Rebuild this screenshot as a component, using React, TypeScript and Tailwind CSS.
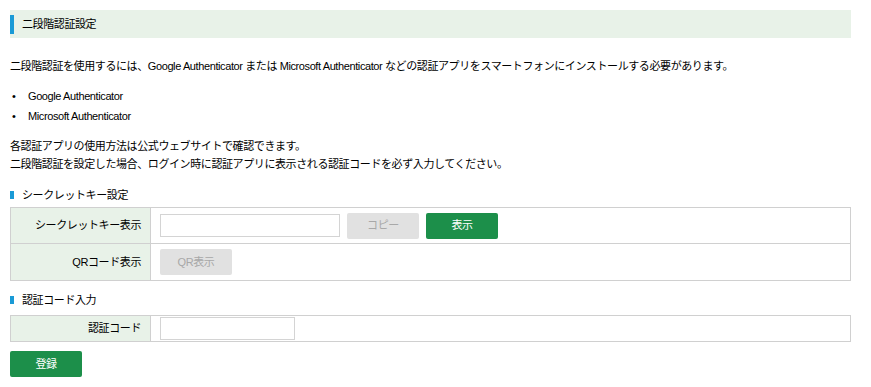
const font = { fontFamily: '"Liberation Sans", "Noto Sans CJK JP", sans-serif' };

function SectionTitle({ children, className }: { children: string; className?: string }) {
  return (
    <div className={`flex items-center gap-[8px] leading-[18px] ${className ?? ""}`}>
      <span className="h-[8px] w-[4px] bg-[#1a9ad6]" />
      <span>{children}</span>
    </div>
  );
}

function GrayButton({ label }: { label: string }) {
  return (
    <button className="h-[26px] w-[72px] rounded-[2px] bg-[#e1e1e1] text-[11px] text-[#a8a8a8]">
      {label}
    </button>
  );
}

export default function App() {
  return (
    <div className="min-h-[387px] w-[871px] bg-white px-[10px] pt-[10px] text-[11px] tracking-[-0.4px] text-black" style={font}>
      <div className="flex h-[28px] w-[841px] items-center bg-[#e8f2e8]">
        <span className="h-[19px] w-[4px] bg-[#1a9ad6]" />
        <span className="ml-[8px]">二段階認証設定</span>
      </div>

      <p className="mt-[18px] leading-[20px]">
        二段階認証を使用するには、Google Authenticator または Microsoft Authenticator などの認証アプリをスマートフォンにインストールする必要があります。
      </p>

      <ul className="mt-[10px]">
        {["Google Authenticator", "Microsoft Authenticator"].map((name) => (
          <li key={name} className="flex leading-[20px]">
            <span className="w-[18px] pl-[2px]">•</span>
            <span>{name}</span>
          </li>
        ))}
      </ul>

      <p className="mt-[11px] leading-[18px]">各認証アプリの使用方法は公式ウェブサイトで確認できます。</p>
      <p className="leading-[18px]">二段階認証を設定した場合、ログイン時に認証アプリに表示される認証コードを必ず入力してください。</p>

      <SectionTitle className="mt-[13px]">シークレットキー設定</SectionTitle>

      <div className="mt-[3px] w-[841px] border border-[#d0d0d0]">
        <div className="flex h-[36px] border-b border-[#d0d0d0]">
          <div className="flex w-[140px] items-center justify-end border-r border-[#d0d0d0] bg-[#e8f2e8] pr-[9px]">
            シークレットキー表示
          </div>
          <div className="flex items-center gap-[7px] pl-[9px]">
            <input className="h-[23px] w-[180px] border border-[#d4d4d4] bg-white outline-none" />
            <GrayButton label="コピー" />
            <button className="h-[26px] w-[72px] rounded-[2px] bg-[#1c8f4a] text-[11px] text-white">表示</button>
          </div>
        </div>
        <div className="flex h-[36px]">
          <div className="flex w-[140px] items-center justify-end border-r border-[#d0d0d0] bg-[#e8f2e8] pr-[9px]">
            QRコード表示
          </div>
          <div className="flex items-center pl-[9px]">
            <GrayButton label="QR表示" />
          </div>
        </div>
      </div>

      <SectionTitle className="mt-[10px]">認証コード入力</SectionTitle>

      <div className="mt-[6px] flex h-[27px] w-[841px] border border-[#d0d0d0]">
        <div className="flex w-[140px] items-center justify-end border-r border-[#d0d0d0] bg-[#e8f2e8] pr-[9px]">
          認証コード
        </div>
        <div className="flex items-center pl-[9px]">
          <input className="h-[23px] w-[135px] border border-[#d4d4d4] bg-white outline-none" />
        </div>
      </div>

      <button className="mt-[9px] h-[26px] w-[72px] rounded-[2px] bg-[#1c8f4a] text-[11px] text-white">登録</button>
    </div>
  );
}
